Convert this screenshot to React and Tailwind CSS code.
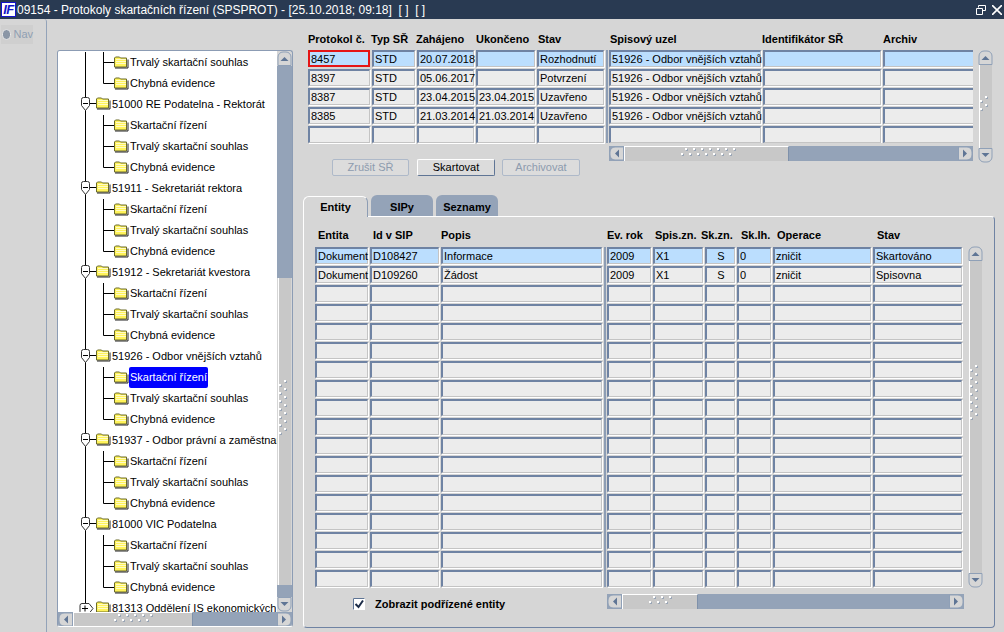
const cellBase = "h-[17px] border-t-2 border-l-2 border-r border-b border-t-[#6f83a3] border-l-[#6f83a3] border-r-[#c4c4c4] border-b-[#c4c4c4] shadow-[1px_1px_0_#fff] pl-px text-[11px] leading-[14px] whitespace-nowrap text-black";

function Cell({ text, active, focus, center }) {
  let cls = cellBase + (active ? " bg-[#bbdefe]" : " bg-[#ececec]");
  if (focus) cls = "h-[17px] border-2 border-[#e51515] bg-[#bbdefe] pl-px text-[11px] leading-[14px] whitespace-nowrap text-black";
  return <div className={cls + (center ? " text-center" : "")}>{text}</div>;
}

function Head({ text, cls, low }) {
  return <div className={"h-[19px] text-[11px] font-bold whitespace-nowrap text-black " + (low ? "leading-[18px] " : "leading-[20px] ") + (cls || "")}>{text}</div>;
}

function Grip({ cols, rows, vertical }) {
  const dots = [];
  for (let r = 0; r < rows; r++) {
    for (let c = 0; c < cols; c++) {
      const a = c * 8 + (r % 2 ? 0 : 4);
      const b = r * 5;
      dots.push(vertical ? [b, a] : [a, b]);
    }
  }
  const w = vertical ? rows * 5 + 2 : cols * 8 + 6;
  const h = vertical ? cols * 8 + 6 : rows * 5 + 2;
  return (
    <svg width={w} height={h} className="shrink-0">
      {dots.map((d, i) => (
        <g key={i}>
          <rect x={d[0] + 1} y={d[1] + 1} width="2" height="2" fill="#9aa6b6" />
          <rect x={d[0]} y={d[1]} width="2" height="2" fill="#fff" />
        </g>
      ))}
    </svg>
  );
}

function Arrow({ dir }) {
  const shapes = {
    up: ["M1 14.5V6a5 5 0 0 1 5-5h3a5 5 0 0 1 5 5v8.5z", "M3.5 10L7.5 6l4 4z"],
    down: ["M1 .5V9a5 5 0 0 0 5 5h3a5 5 0 0 0 5-5V.5z", "M3.5 5l4 4 4-4z"],
    left: ["M14.5 1H6a5 5 0 0 0-5 5v3a5 5 0 0 0 5 5h8.5z", "M10 3.5L6 7.5l4 4z"],
    right: ["M.5 1H9a5 5 0 0 1 5 5v3a5 5 0 0 1-5 5H.5z", "M5 3.5l4 4-4 4z"],
  };
  const s = shapes[dir];
  return (
    <svg width="15" height="15" className="shrink-0 block">
      <path d={s[0]} fill="#d6d6d6" stroke="#8fa0b7" />
      <path d={s[1]} fill="#5f7595" />
    </svg>
  );
}

function HScroll({ width, thumb, gripCols, gripLeft }) {
  return (
    <div className={"flex h-[15px] bg-[#94a3b8] " + width}>
      <Arrow dir="left" />
      <div className={"h-[15px] bg-[#c8c8c8] border-t border-t-white border-l border-l-white border-r border-r-[#7f91aa] flex items-center " + thumb + " " + gripLeft}>
        <Grip cols={gripCols} rows={2} />
      </div>
      <div className="flex-1" />
      <Arrow dir="right" />
    </div>
  );
}

function VScroll({ height, thumb, gripTop, gripCols, before, after }) {
  return (
    <div className={"flex flex-col items-center w-[15px] shrink-0 " + height}>
      <Arrow dir="up" />
      {before}
      <div className={"w-[13px] bg-[#c8c8c8] border-l border-l-white flex flex-col items-center " + thumb + " " + gripTop}>
        <Grip cols={gripCols} rows={2} vertical />
      </div>
      {after}
      <Arrow dir="down" />
    </div>
  );
}

function Folder() {
  return (
    <g>
      <path d="M.5 11.5V2.5l1-1h4l1 1h6v9z" fill="#fff35a" stroke="#6b6b2a" />
      <path d="M1 12.5h13V4" fill="none" stroke="#222" />
      <path d="M2 4h10M2 6h10M2 8h10" stroke="#fffbc8" />
    </g>
  );
}

function TreeRow({ item }) {
  if (item.kind === "child") {
    return (
      <div className="h-[21px] flex items-center shrink-0">
        <svg width="72" height="21" className="shrink-0">
          <path d="M27.5 0v21" stroke="#000" />
          <path d={item.last ? "M45.5 0v10.5H56" : "M45.5 0v21M45.5 10.5H56"} stroke="#000" fill="none" />
          <g transform="translate(56 3.5)"><Folder /></g>
        </svg>
        <span className={item.selected ? "bg-[#0000ff] text-white h-[21px] leading-[20px] px-px -ml-px rounded-[2px] text-[11px]" : "text-[11px] text-black whitespace-nowrap"}>{item.text}</span>
      </div>
    );
  }
  return (
    <div className="h-[21px] flex items-center shrink-0">
      <svg width="54" height="21" className="shrink-0">
        {item.closed ? (
          <g>
            <path d="M27.5 0v5" stroke="#000" />
            <path d="M24 5.5h7l4 5-4 5h-7a2 2 0 0 1-2-2v-6a2 2 0 0 1 2-2z" fill="#fff" stroke="#333" />
            <path d="M24 10.5h6M27 7.5v6" stroke="#000" />
          </g>
        ) : (
          <g>
            <path d="M27.5 0v21" stroke="#000" />
            <path d="M23.5 5.5a2 2 0 0 1 2-2h4a2 2 0 0 1 2 2v6l-4 5-4-5z" fill="#fff" stroke="#333" />
            <path d="M25 9.5h5" stroke="#000" />
            <path d="M32 9.5h6" stroke="#000" />
          </g>
        )}
        <g transform="translate(38 2.5)"><Folder /></g>
      </svg>
      <span className="text-[11px] text-black whitespace-nowrap">{item.text}</span>
    </div>
  );
}

const groups = [
  "51000 RE Podatelna - Rektorát",
  "51911 - Sekretariát rektora",
  "51912 - Sekretariát kvestora",
  "51926 - Odbor vnějších vztahů",
  "51937 - Odbor právní a zaměstnanecké",
  "81000 VIC Podatelna",
];

const treeItems = [
  { kind: "child", text: "Trvalý skartační souhlas" },
  { kind: "child", text: "Chybná evidence", last: true },
];
groups.forEach((g) => {
  treeItems.push({ kind: "group", text: g });
  treeItems.push({ kind: "child", text: "Skartační řízení", selected: g.startsWith("51926") });
  treeItems.push({ kind: "child", text: "Trvalý skartační souhlas" });
  treeItems.push({ kind: "child", text: "Chybná evidence", last: true });
});
treeItems.push({ kind: "group", text: "81313 Oddělení IS ekonomických a", closed: true });

const topLeft = [
  ["8457", "STD", "20.07.2018", "", "Rozhodnutí"],
  ["8397", "STD", "05.06.2017", "", "Potvrzení"],
  ["8387", "STD", "23.04.2015", "23.04.2015", "Uzavřeno"],
  ["8385", "STD", "21.03.2014", "21.03.2014", "Uzavřeno"],
  ["", "", "", "", ""],
];
const uzel = "51926 - Odbor vnějších vztahů";
const topRight = [[uzel, "", ""], [uzel, "", ""], [uzel, "", ""], [uzel, "", ""], ["", "", ""]];

const lowerLeft = [["Dokument", "D108427", "Informace"], ["Dokument", "D109260", "Žádost"]];
const lowerRight = [
  ["2009", "X1", "S", "0", "zničit", "Skartováno"],
  ["2009", "X1", "S", "0", "zničit", "Spisovna"],
];
const blank = Array.from({ length: 16 });

export default function App() {
  return (
    <div className="w-[1004px] h-[632px] overflow-hidden flex flex-col bg-[#d6d6d6] font-['Liberation_Sans',Arial,sans-serif]">
      <div className="h-[19px] shrink-0 bg-[#293a52] flex items-center text-white text-[12px]">
        <div className="w-[15px] h-[15px] ml-px mr-[1px] bg-white border border-[#1414c8] flex items-center justify-center text-[#1414c8] text-[13px] font-bold italic leading-none tracking-[-0.5px]">
          IF
        </div>
        <span className="whitespace-pre">09154 - Protokoly skartačních řízení (SPSPROT) - [25.10.2018; 09:18]  [ ]  [ ]</span>
        <div className="ml-auto flex items-center gap-[6px] pr-[2px]">
          <svg width="10" height="10" fill="none" stroke="#fff">
            <path d="M2.5 2.5V.5h7v5h-3M.5 3.5h6v6h-6z" />
          </svg>
          <svg width="10" height="10" stroke="#fff" strokeWidth="1.6">
            <path d="M0 0l10 10M10 0L0 10" />
          </svg>
        </div>
      </div>

      <div className="flex flex-1 min-h-0">
        <div className="w-[47px] shrink-0 border-r border-r-[#93a3b9] rounded-tr-[3px] pt-[6px] pl-px">
          <div className="w-[32px] h-[19px] bg-[#cfcfcf] flex items-center gap-[2px] pl-px">
            <div className="w-[11px] h-[11px] rounded-full bg-[#8a96a6] border border-[#e8e8e8]" />
            <span className="text-[11px] text-[#8f9fb3]">Nav</span>
          </div>
        </div>

        <div className="pl-[10px] pt-[31px] shrink-0">
          <div className="w-[236px] h-[577px] border border-[#8c9cb4] border-b-white rounded-[3px] flex flex-col overflow-hidden">
            <div className="flex h-[561px] shrink-0">
              <div className="w-[220px] bg-white overflow-hidden flex flex-col pt-px">
                {treeItems.map((it, i) => (
                  <TreeRow key={i} item={it} />
                ))}
              </div>
              <VScroll
                height="h-[561px]"
                thumb="h-[307px]"
                gripTop="pt-[102px]"
                gripCols={7}
                before={<div className="w-[15px] h-[212px] bg-[#94a3b8]" />}
                after={<div className="w-[15px] h-[12px] bg-[#94a3b8]" />}
              />
            </div>
            <HScroll width="w-[234px]" thumb="w-[120px]" gripCols={5} gripLeft="pl-[40px]" />
          </div>
        </div>

        <div className="flex-1 pl-[10px] min-w-0">
          <div className="h-[176px] pl-[5px] pt-[10px] flex">
            <div className="w-[296px] shrink-0">
              <div className="grid grid-cols-[62px_43px_57px_59px_67px] gap-[2px]">
                <Head text="Protokol č." />
                <Head text="Typ SŘ" cls="-ml-[1px]" />
                <Head text="Zahájeno" cls="-ml-[1px]" />
                <Head text="Ukončeno" />
                <Head text="Stav" cls="pl-px" />
                {topLeft.map((r, i) =>
                  r.map((v, j) => <Cell key={i + "-" + j} text={v} active={i === 0} focus={i === 0 && j === 0} />)
                )}
              </div>
              <div className="flex gap-[8px] pl-[24px] mt-[16px]">
                <button className="w-[77px] h-[17px] bg-[#dcdcdc] border border-[#aeb9c9] rounded-[2px] text-[11px] leading-none text-[#8d9bae]">Zrušit SŘ</button>
                <button className="w-[78px] h-[17px] bg-[#dcdcdc] border border-white border-r-[#5f7595] border-b-[#5f7595] rounded-[2px] text-[11px] leading-none text-black">Skartovat</button>
                <button className="w-[78px] h-[17px] ml-[-1px] bg-[#dcdcdc] border border-[#aeb9c9] rounded-[2px] text-[11px] leading-none text-[#8d9bae]">Archivovat</button>
              </div>
            </div>
            <div className="w-[2px] h-[93px] mt-[21px] ml-[2px] bg-[#8d9db4] shrink-0" />
            <div className="w-[364px] shrink-0 ml-px">
              <div className="grid grid-cols-[152px_118px_92px] gap-[2px] overflow-hidden">
                <Head text="Spisový uzel" cls="pl-px" />
                <Head text="Identifikátor SŘ" cls="-ml-[1px]" />
                <Head text="Archiv" />
                {topRight.map((r, i) =>
                  r.map((v, j) => <Cell key={i + "-" + j} text={v} active={i === 0} />)
                )}
              </div>
              <div className="mt-[3px]">
                <HScroll width="w-[364px]" thumb="w-[165px]" gripCols={7} gripLeft="pl-[56px]" />
              </div>
            </div>
            <div className="ml-[5px] mt-[21px]">
              <VScroll height="h-[113px]" thumb="h-[83px]" gripTop="pt-[31px]" gripCols={2} />
            </div>
          </div>

          <div className="flex h-[21px] items-end gap-[3px]">
            <div className="w-[65px] h-[21px] -mb-px z-10 bg-[#d6d6d6] border-t border-l border-t-white border-l-white border-r border-r-[#8d9db4] rounded-t-[6px] text-center text-[11px] font-bold leading-[21px] text-black">Entity</div>
            <div className="w-[62px] h-[21px] bg-[#94a3b8] rounded-t-[6px] text-center text-[11px] font-bold leading-[24px] text-black">SIPy</div>
            <div className="w-[62px] h-[21px] bg-[#94a3b8] rounded-t-[6px] text-center text-[11px] font-bold leading-[24px] text-black">Seznamy</div>
          </div>

          <div className="w-[692px] h-[412px] border border-white border-r-[#6f83a3] border-b-[#6f83a3] rounded-[4px] rounded-tl-none pl-[11px] pt-[9px] flex">
            <div className="w-[287px] shrink-0">
              <div className="grid grid-cols-[53px_69px_161px] gap-[2px]">
                <Head low text="Entita" cls="pl-[3px]" />
                <Head low text="Id v SIP" cls="pl-[3px]" />
                <Head low text="Popis" />
                {lowerLeft.map((r, i) =>
                  r.map((v, j) => <Cell key={i + "-" + j} text={v} active={i === 0} />)
                )}
                {blank.map((_, i) =>
                  [0, 1, 2].map((j) => <Cell key={"b" + i + "-" + j} text="" />)
                )}
              </div>
              <label className="flex items-center gap-[10px] pl-[38px] mt-[9px]">
                <svg width="12" height="12" className="shrink-0">
                  <rect width="12" height="12" fill="#fff" />
                  <path d="M.5 11.5V.5h11" fill="none" stroke="#5f7595" />
                  <path d="M2.5 6l3 3 4.5-6.5" fill="none" stroke="#1c2c48" strokeWidth="2" />
                </svg>
                <span className="text-[11px] font-bold text-black whitespace-nowrap">Zobrazit podřízené entity</span>
              </label>
            </div>
            <div className="w-[2px] h-[340px] mt-[21px] ml-[2px] bg-[#8d9db4] shrink-0" />
            <div className="w-[357px] shrink-0 ml-px">
              <div className="grid grid-cols-[44px_50px_30px_34px_98px_89px] gap-[2px]">
                <Head low text="Ev. rok" />
                <Head low text="Spis.zn." cls="pl-[2px]" />
                <Head low text="Sk.zn." cls="-ml-[4px]" />
                <Head low text="Sk.lh." cls="pl-[4px]" />
                <Head low text="Operace" cls="pl-[4px]" />
                <Head low text="Stav" cls="pl-[4px]" />
                {lowerRight.map((r, i) =>
                  r.map((v, j) => <Cell key={i + "-" + j} text={v} active={i === 0} center={j === 2} />)
                )}
                {blank.map((_, i) =>
                  [0, 1, 2, 3, 4, 5].map((j) => <Cell key={"b" + i + "-" + j} text="" />)
                )}
              </div>
              <div className="mt-[7px]">
                <HScroll width="w-[357px]" thumb="w-[76px]" gripCols={3} gripLeft="pl-[26px]" />
              </div>
            </div>
            <div className="ml-[4px] mt-[20px]">
              <VScroll height="h-[342px]" thumb="h-[312px]" gripTop="pt-[104px]" gripCols={7} />
            </div>
          </div>
        </div>
      </div>
    </div>
  );
}
